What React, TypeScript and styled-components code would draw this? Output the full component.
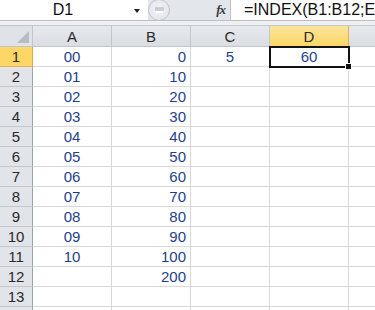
import React from 'react';
import styled, { createGlobalStyle } from 'styled-components';

const GlobalStyle = createGlobalStyle`
  html, body {
    margin: 0;
    padding: 0;
    background: #ffffff;
    overflow: hidden;
  }
  body {
    font-family: 'Liberation Sans', Arial, sans-serif;
  }
`;

const columns = ['A', 'B', 'C', 'D', 'E'];

const rows: string[][] = [
  ['00', '0', '5', '60', ''],
  ['01', '10', '', '', ''],
  ['02', '20', '', '', ''],
  ['03', '30', '', '', ''],
  ['04', '40', '', '', ''],
  ['05', '50', '', '', ''],
  ['06', '60', '', '', ''],
  ['07', '70', '', '', ''],
  ['08', '80', '', '', ''],
  ['09', '90', '', '', ''],
  ['10', '100', '', '', ''],
  ['', '200', '', '', ''],
  ['', '', '', '', ''],
  ['', '', '', '', ''],
];

const Sheet: React.FC = () => {
  return (
    <Window>
      <FormulaBar>
        <NameBox>
          <NameText>D1</NameText>
          <DropArrow />
        </NameBox>
        <Splitter>
          <RoundButton>
            <Dash />
          </RoundButton>
          <FxLabel>fx</FxLabel>
        </Splitter>
        <FormulaInput>=INDEX(B1:B12;E1+1)</FormulaInput>
      </FormulaBar>
      <Strip />
      <Grid>
        <Corner>
          <CornerTriangle />
        </Corner>
        {columns.map((c) => (
          <ColHeader key={c} $active={c === 'D'}>
            {c}
          </ColHeader>
        ))}
        {rows.map((row, r) => (
          <React.Fragment key={r}>
            <RowHeader $active={r === 0}>{r + 1}</RowHeader>
            {row.map((value, c) => (
              <Cell
                key={c}
                $align={c === 1 ? 'right' : 'center'}
                $selected={r === 0 && c === 3}
              >
                {value}
                {r === 0 && c === 3 && <FillHandle />}
              </Cell>
            ))}
          </React.Fragment>
        ))}
      </Grid>
    </Window>
  );
};

export default function App() {
  return (
    <>
      <GlobalStyle />
      <Sheet />
    </>
  );
}

const Window = styled.div`
  width: 375px;
  height: 310px;
  overflow: hidden;
  background: #ffffff;
`;

const FormulaBar = styled.div`
  display: flex;
  height: 21px;
  box-sizing: border-box;
  border-bottom: 1px solid #b9c0c9;
  background: #e3e6ea;
`;

const NameBox = styled.div`
  position: relative;
  width: 148px;
  background: #ffffff;
  display: flex;
  align-items: center;
  justify-content: center;
  box-sizing: border-box;
`;

const NameText = styled.span`
  font-size: 16px;
  color: #111111;
  margin-right: 22px;
  line-height: 20px;
`;

const DropArrow = styled.span`
  position: absolute;
  right: 8px;
  top: 9px;
  width: 0;
  height: 0;
  border-left: 3.5px solid transparent;
  border-right: 3.5px solid transparent;
  border-top: 4px solid #222222;
`;

const Splitter = styled.div`
  width: 83px;
  display: flex;
  align-items: center;
  justify-content: space-between;
  border-right: 1px solid #b9c0c9;
  box-sizing: border-box;
  padding-right: 5px;
  background: #e3e6ea;
`;

const RoundButton = styled.div`
  width: 22px;
  height: 22px;
  margin-top: -1px;
  border-radius: 50%;
  border: 1px solid #bfc4ca;
  box-sizing: border-box;
  background: radial-gradient(circle at 50% 45%, #f2f3f5 0%, #e4e7eb 70%, #d8dce1 100%);
  display: flex;
  align-items: center;
  justify-content: center;
`;

const Dash = styled.span`
  width: 7px;
  height: 2px;
  margin-top: 4px;
  background: #ffffff;
  box-shadow: 0 -3px 0 1px #c9cdd3;
`;

const FxLabel = styled.span`
  font-family: 'Liberation Serif', 'Times New Roman', serif;
  font-style: italic;
  font-weight: bold;
  font-size: 13px;
  color: #3c3c3c;
  letter-spacing: -1px;
`;

const FormulaInput = styled.div`
  flex: 1;
  background: #ffffff;
  font-size: 16px;
  color: #111111;
  line-height: 20px;
  padding-left: 13px;
  white-space: nowrap;
  overflow: hidden;
`;

const Strip = styled.div`
  height: 5px;
  box-sizing: border-box;
  background: #eef0f3;
  border-bottom: 1px solid #c4c9d0;
`;

const Grid = styled.div`
  display: grid;
  grid-template-columns: 33px 79px 79px 79px 79px 79px;
  grid-template-rows: 21px;
  grid-auto-rows: 20px;
  font-size: 15px;
`;

const headerBase = `
  box-sizing: border-box;
  border-right: 1px solid #c2c7ce;
  border-bottom: 1px solid #c2c7ce;
  display: flex;
  align-items: center;
  justify-content: center;
  color: #2a2a2a;
`;

const Corner = styled.div`
  ${headerBase}
  position: relative;
  background: #dfe3e8;
`;

const CornerTriangle = styled.span`
  position: absolute;
  right: 3px;
  bottom: 3px;
  width: 0;
  height: 0;
  border-left: 12px solid transparent;
  border-bottom: 12px solid #b7bcc2;
`;

const ColHeader = styled.div<{ $active?: boolean }>`
  ${headerBase}
  background: ${(p) =>
    p.$active
      ? 'linear-gradient(#fbe49b, #fcd766)'
      : 'linear-gradient(#e6e9ed, #dadee4)'};
  border-bottom-color: ${(p) => (p.$active ? '#e2a842' : '#c2c7ce')};
  border-right-color: ${(p) => (p.$active ? '#e2b156' : '#c2c7ce')};
`;

const RowHeader = styled.div<{ $active?: boolean }>`
  ${headerBase}
  background: ${(p) => (p.$active ? '#fcd766' : '#e1e4e8')};
  border-right-color: ${(p) => (p.$active ? '#e2a842' : '#9ea4ab')};
  border-bottom-color: ${(p) => (p.$active ? '#e2b156' : '#c2c7ce')};
`;

const Cell = styled.div<{ $align: 'right' | 'center'; $selected?: boolean }>`
  position: relative;
  box-sizing: border-box;
  border-right: 1px solid #d8d8d8;
  border-bottom: 1px solid #d8d8d8;
  display: flex;
  align-items: center;
  justify-content: ${(p) => (p.$align === 'right' ? 'flex-end' : 'center')};
  padding-right: ${(p) => (p.$align === 'right' ? '4px' : '0')};
  color: #1f3f8c;
  outline: ${(p) => (p.$selected ? '2px solid #111111' : 'none')};
  outline-offset: ${(p) => (p.$selected ? '-1px' : '0')};
  z-index: ${(p) => (p.$selected ? 1 : 0)};
`;

const FillHandle = styled.span`
  position: absolute;
  right: -4px;
  bottom: -4px;
  width: 5px;
  height: 5px;
  background: #111111;
  border: 1px solid #ffffff;
`;
